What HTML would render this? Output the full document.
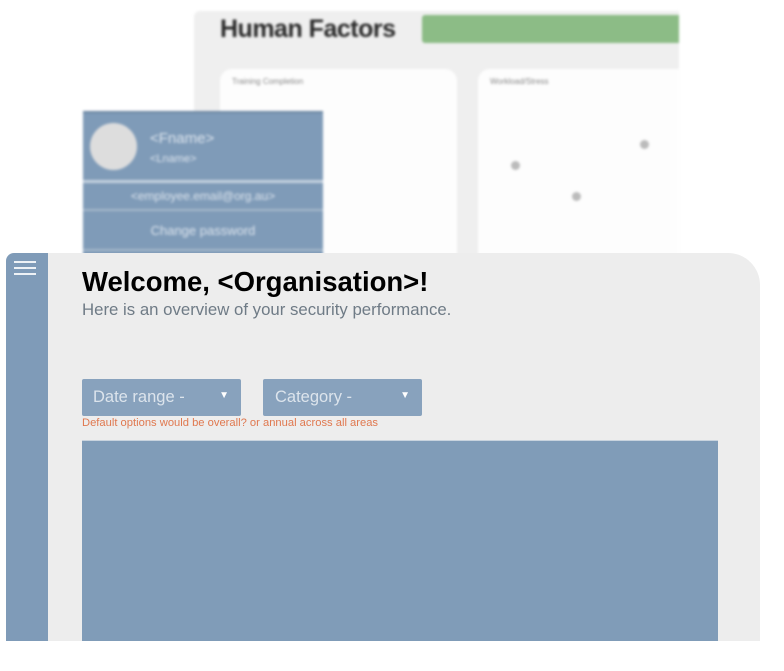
<!DOCTYPE html>
<html><head><meta charset="utf-8"><style>
*{margin:0;padding:0;box-sizing:border-box}
body{width:784px;height:671px;background:#fff;position:relative;overflow:hidden;font-family:"Liberation Sans",sans-serif}
.abs{position:absolute}
.blur{filter:blur(1.3px)}
</style></head><body>
<div class="abs blur" style="left:194px;top:11px;width:485px;height:260px;background:#efefef;border-radius:6px 0 0 0;overflow:hidden">
  <div class="abs" style="left:26px;top:4px;font-size:25px;font-weight:bold;color:#2a2a2a;letter-spacing:-0.5px">Human Factors</div>
  <div class="abs" style="left:228px;top:4px;width:257px;height:28px;background:#8cbc86;border-radius:3px 0 0 3px"></div>
  <div class="abs" style="left:26px;top:58px;width:237px;height:210px;background:#fdfdfd;border-radius:12px"><div style="font-size:8px;color:#888;padding:8px 12px">Training Completion</div></div>
  <div class="abs" style="left:284px;top:58px;width:230px;height:210px;background:#fdfdfd;border-radius:12px"><div style="font-size:8px;color:#888;padding:8px 12px">Workload/Stress</div>
    <div class="abs" style="left:33px;top:92px;width:9px;height:9px;border-radius:50%;background:#bbb"></div>
    <div class="abs" style="left:162px;top:71px;width:9px;height:9px;border-radius:50%;background:#bbb"></div>
    <div class="abs" style="left:94px;top:123px;width:9px;height:9px;border-radius:50%;background:#bbb"></div>
  </div>
</div>
<div class="abs blur" style="left:83px;top:111px;width:240px;height:150px;background:#7f9bb8;border-top:2px solid #6b85a0">
  <div class="abs" style="left:7px;top:10px;width:47px;height:47px;border-radius:50%;background:#ddd"></div>
  <div class="abs" style="left:67px;top:17px;font-size:15px;color:#dde5ee">&lt;Fname&gt;</div>
  <div class="abs" style="left:67px;top:40px;font-size:11px;color:#dde5ee">&lt;Lname&gt;</div>
  <div class="abs" style="left:0;top:67px;width:240px;height:3px;background:#c5d2df"></div>
  <div class="abs" style="left:0;top:76px;width:240px;text-align:center;font-size:12px;color:#dde5ee">&lt;employee.email@org.au&gt;</div>
  <div class="abs" style="left:0;top:96px;width:240px;height:2px;background:#a6b9cc"></div>
  <div class="abs" style="left:0;top:110px;width:240px;text-align:center;font-size:13px;color:#dde5ee">Change password</div>
  <div class="abs" style="left:0;top:136px;width:240px;height:2px;background:#a6b9cc"></div>
</div>
<div class="abs" style="left:6px;top:253px;width:754px;height:388px;background:#ededed;border-radius:8px 32px 0 0;overflow:hidden">
  <div class="abs" style="left:0;top:0;width:42px;height:388px;background:#7f9bb8"></div>
  <div class="abs" style="left:8px;top:8px;width:22px;height:2px;background:#eef2f6"></div>
  <div class="abs" style="left:8px;top:14px;width:22px;height:2px;background:#eef2f6"></div>
  <div class="abs" style="left:8px;top:20px;width:22px;height:2px;background:#eef2f6"></div>
  <div class="abs" style="left:76px;top:13px;font-size:27.5px;font-weight:bold;color:#000">Welcome, &lt;Organisation&gt;!</div>
  <div class="abs" style="left:76px;top:47px;font-size:16.8px;color:#6f7b86">Here is an overview of your security performance.</div>
  <div class="abs" style="left:76px;top:126px;width:159px;height:37px;background:#88a2bd;border-radius:2px;color:#dce4ec;font-size:16.5px;padding:9px 11px">Date range -<span style="position:absolute;right:12px;top:11px;font-size:10px;color:#fff">▼</span></div>
  <div class="abs" style="left:257px;top:126px;width:159px;height:37px;background:#88a2bd;border-radius:2px;color:#dce4ec;font-size:16.5px;padding:9px 12px">Category -<span style="position:absolute;right:12px;top:11px;font-size:10px;color:#fff">▼</span></div>
  <div class="abs" style="left:76px;top:164px;font-size:11.2px;color:#e0784f">Default options would be overall? or annual across all areas</div>
  <div class="abs" style="left:76px;top:187px;width:636px;height:201px;background:#809cb8;border-top:1px solid #c8d3de"></div>
</div>
</body></html>
